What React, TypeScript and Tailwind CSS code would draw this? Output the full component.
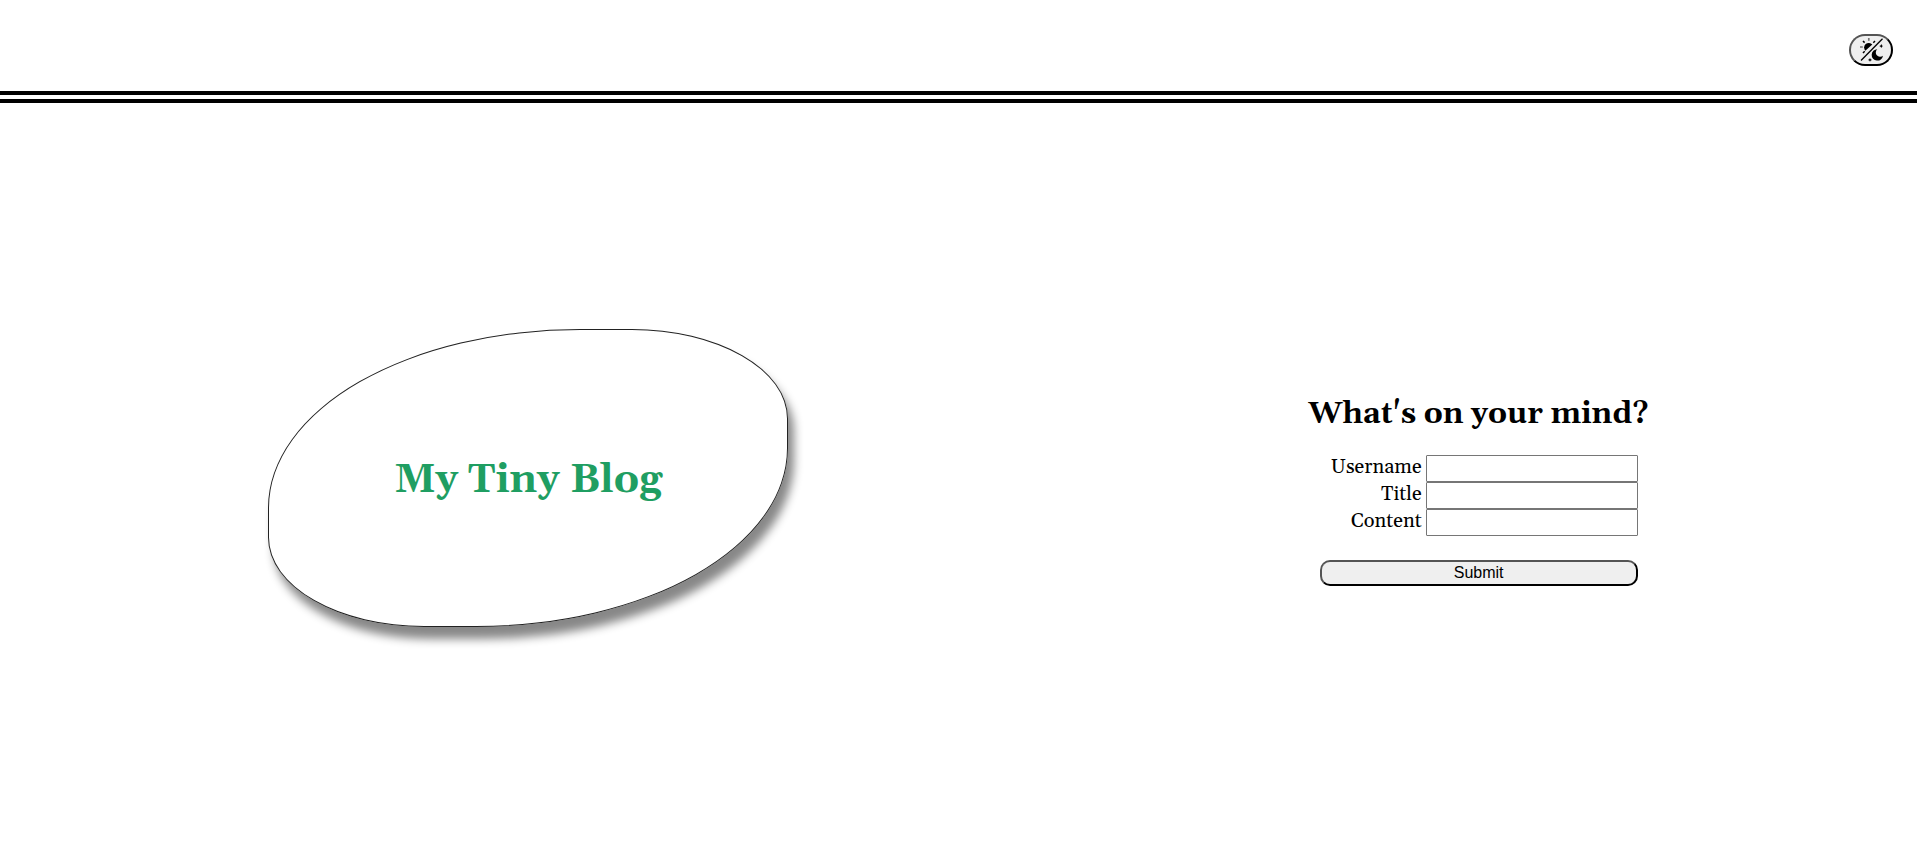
import { useState } from "react";

const fields = [
  { id: "username", label: "Username" },
  { id: "title", label: "Title" },
  { id: "content", label: "Content" },
];

function DayNightIcon() {
  return (
    <svg viewBox="0 0 24 24" className="size-6 shrink-0" aria-hidden="true">
      <path d="M6.300 12.700a4.400 4.400 0 1 1 7-6.200z" fill="#000" />
      <g stroke="#000">
        <path d="M2 22.500L23.500 .8" strokeWidth="1.300" />
        <path d="M9.800 0v2.800M1 9h2.800" strokeWidth="1.700" stroke="#777" />
        <path d="M4 3l1.600 1.600M16 3l-1.700 1.700M4 15l1.700-1.700" strokeWidth="1.500" />
      </g>
      <path d="M18.300 11.200a5.700 5.700 0 1 0 5.700 6.600a3.800 3.800 0 1 1-5.700-6.600z" fill="#000" />
      <path
        d="M22.300 6.100l.7 1.400 1 .6-1 .6-.7 1.400-.7-1.400-1.400-.6 1.400-.6zM11 20l.7 1.300 1.400.6-1.400.6-.7 1.300-.7-1.300-1.400-.6 1.400-.6z"
        fill="#000"
      />
    </svg>
  );
}

export default function App() {
  const [dark, setDark] = useState(false);

  return (
    <div
      className={
        dark
          ? "flex min-h-screen flex-col bg-neutral-900 font-[Georgia,Gelasio,'Liberation_Serif',serif] text-white"
          : "flex min-h-screen flex-col bg-white font-[Georgia,Gelasio,'Liberation_Serif',serif] text-black"
      }
    >
      <header className="flex justify-end border-b-12 border-double border-black px-6 pt-[34px] pb-[25px]">
        <button
          type="button"
          aria-label="Toggle theme"
          onClick={() => setDark(!dark)}
          className="flex h-8 w-11 items-center justify-center rounded-2xl border-2 border-black bg-[#efefef] [border-style:outset]"
        >
          <DayNightIcon />
        </button>
      </header>

      <main className="flex flex-1 items-center justify-between px-[14%] pb-2.5">
        <section className="flex h-[298px] w-[520px] items-center justify-center rounded-[60%_30%] border border-[#222] pt-1.5 shadow-[6px_12px_10px_#888]">
          <h1 className="text-[40px] font-bold text-[#1f9e62]">My Tiny Blog</h1>
        </section>

        <form
          className="flex flex-col items-center pt-6.5"
          onSubmit={(event) => event.preventDefault()}
        >
          <h2 className="text-[30px] leading-[34px] font-bold">What's on your mind?</h2>
          <div className="mt-6 flex w-[318px] flex-col">
            {fields.map((field) => (
              <div key={field.id} className="flex h-[27px] justify-end gap-1">
                <label htmlFor={field.id} className="text-[20px] leading-6">
                  {field.label}
                </label>
                <input
                  id={field.id}
                  type="text"
                  className="w-[212px] rounded-[1px] border border-[#767676] bg-white px-1 text-black"
                />
              </div>
            ))}
            <button
              type="submit"
              className="mt-6 h-[26px] rounded-[10px] border-2 border-black bg-[#efefef] font-['Liberation_Sans',Arial,sans-serif] text-base leading-5 text-black [border-style:outset]"
            >
              Submit
            </button>
          </div>
        </form>
      </main>
    </div>
  );
}
